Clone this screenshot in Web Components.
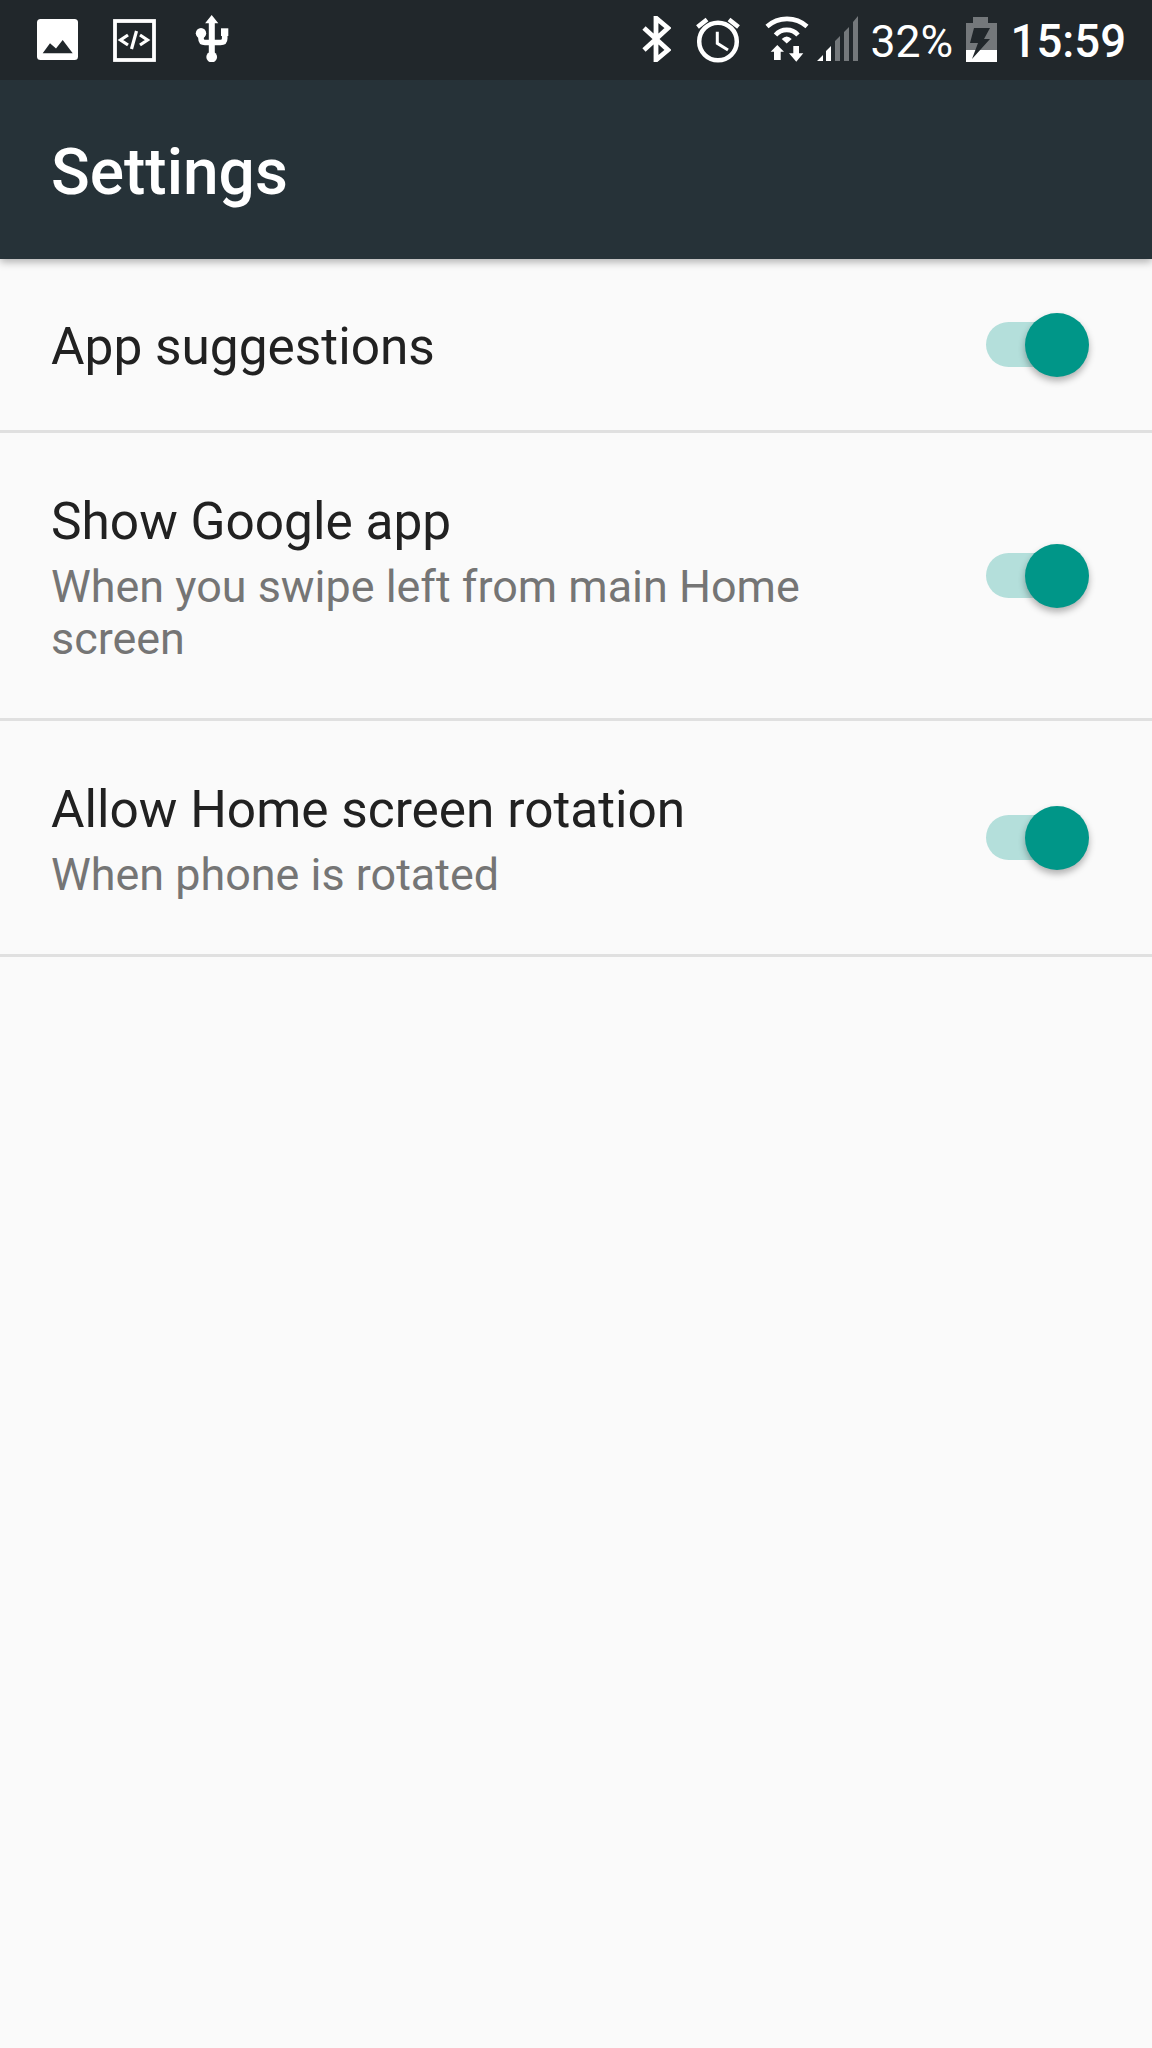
<!DOCTYPE html>
<html><head><meta charset="utf-8"><style>
html,body{margin:0;padding:0;background:#fafafa}
body{width:1152px;height:2048px;overflow:hidden;font-family:Roboto,sans-serif}
</style></head><body>
<settings-screen>
<status-bar></status-bar>
<app-bar>Settings</app-bar>
<setting-row title-text="App suggestions" style="--row:174px;--t:2px"></setting-row>
<setting-row title-text="Show Google app" style="--row:288px">When you swipe left from main Home screen</setting-row>
<setting-row title-text="Allow Home screen rotation" style="--row:236px">When phone is rotated</setting-row>
</settings-screen>
<script>
const def=(n,html)=>customElements.define(n,class extends HTMLElement{connectedCallback(){if(this.shadowRoot)return;const s=this.attachShadow({mode:'open'});s.innerHTML=typeof html==='function'?html(this):html;}});
def('settings-screen',`<style>:host{display:flex;flex-direction:column;width:1152px;height:2048px;background:#fafafa}</style><slot></slot>`);
def('status-bar',`<style>
:host{display:flex;align-items:center;height:80px;background:#21272b;color:#fff;font:400 44.5px Roboto,sans-serif;position:relative;z-index:2}
svg{display:block;flex:none}
.l{display:flex;align-items:center;padding-left:36px}
.r{margin-left:auto;display:flex;align-items:center;padding-right:26px}
span{line-height:80px;white-space:nowrap;margin-top:4px}
</style>
<div class="l">
<svg width="43" height="43" viewBox="0 0 43 43" style="margin-top:-1px"><rect width="41" height="41" x="1" y="1" rx="3.5" fill="#fff"/><path d="M6.700 35.300 14 25.300l6 5.200L26.700 22l10 13.300z" fill="#21272b"/></svg>
<svg width="43" height="43" viewBox="0 0 43 43" style="margin:1px 0 0 34px"><rect x="2" y="2" width="39" height="39" fill="none" stroke="#fff" stroke-width="3.800"/><path d="M15 16l-7.500 5 7.500 5M27 16l7.500 5-7.500 5M23.500 12l-5 18" fill="none" stroke="#fff" stroke-width="3.200"/></svg>
<svg width="36" height="48" viewBox="0 0 36 48" style="margin:-4px 0 0 38px"><path d="M17.700 1l6.600 8.300H20.800V39h-6V9.300H11.100z" fill="#fff"/><circle cx="17.700" cy="43" r="5.400" fill="#fff"/><circle cx="7" cy="19.300" r="5.200" fill="#fff"/><rect x="27" y="14.300" width="7.300" height="7.700" fill="#fff"/><path d="M7 20v4.500q0 4 4 4H26.500q4.200 0 4.200-4V21" fill="none" stroke="#fff" stroke-width="5.600"/></svg>
</div>
<div class="r">
<svg width="30" height="46" viewBox="0 0 30 46" style="margin-top:-2px"><path d="M3 12l24 22-12 10V2l12 10L3 34" fill="none" stroke="#fff" stroke-width="4.800"/></svg>
<svg width="46" height="46" viewBox="0 0 46 46" style="margin:0 0 0 24px"><circle cx="23" cy="24.500" r="18.800" fill="none" stroke="#fff" stroke-width="4.500"/><path d="M22.300 14.700v11.600L33 33" fill="none" stroke="#fff" stroke-width="3"/><path d="M2.500 10L12 2.500M43.500 10L34 2.500" stroke="#fff" stroke-width="4.500"/></svg>
<svg width="46" height="46" viewBox="0 0 46 46" style="margin:-2px 0 0 24px"><path d="M2 10.500A30 30 0 0 1 42 10.500M10.500 19A15 15 0 0 1 33 19" fill="none" stroke="#fff" stroke-width="4.600"/><path d="M16.700 23Q21.700 18 26.700 23l-5 4.500z" fill="#fff"/><path d="M12.300 29 5.700 35.700H9V44h6.700V35.700H19zM28.300 30v7.300H24l7.300 8.400 7-8.400H34V30z" fill="#fff"/></svg>
<svg width="42" height="46" viewBox="0 0 42 46" style="margin:-4px 0 0 6px"><path d="M0 46l6-6v6zM9 46V36l5-5v15z" fill="#fff"/><path d="M18 46V26l5-5v25zM27 46V17l5-5v34zM36 46V7l5-6v45z" fill="#74787b"/></svg>
<span style="margin-left:11px">32%</span>
<svg width="31" height="46" viewBox="0 0 31 46" style="margin:-2px 0 0 13px"><path d="M0 7h7V1h15v6h9v28H0z" fill="#74787b"/><rect y="34" width="31" height="12" fill="#fff"/><path d="M8 12h16l-6 11h6L6 43l6-16H4z" fill="#21272b"/></svg>
<span style="margin-left:13.500px;font-weight:500;font-size:45.500px">15:59</span>
</div>`);
def('app-bar',`<style>
:host{display:flex;align-items:center;box-sizing:border-box;height:179px;padding:0 51px 0 51px;background:#263238;color:#fff;font:500 64px Roboto,sans-serif;box-shadow:0 3px 8px rgba(0,0,0,.3);position:relative;z-index:1}
div{margin-top:5px}
</style><div><slot></slot></div>`);
def('setting-row',e=>`<style>
:host{display:flex;align-items:center;justify-content:space-between;box-sizing:border-box;height:var(--row);padding:3.500px 76px 0 51px;border-bottom:3px solid #e0e0e0;background:#fafafa}
.x{padding-top:var(--t,0)}
.t{font:400 51.400px/64px Roboto,sans-serif;color:#212121}
.s{font:400 44.900px/52px Roboto,sans-serif;color:#757575;width:800px;margin-top:6.700px}
.s.e{display:none}
.sw{position:relative;width:90px;height:45px;flex:none;border-radius:23px;background:#b4dfdb;margin-top:-3px}
.sw::after{content:"";position:absolute;right:-13px;top:-9px;width:64px;height:64px;border-radius:50%;background:#009688;box-shadow:0 4px 7px rgba(0,0,0,.3)}
</style><div class="x"><div class="t">${e.getAttribute('title-text')}</div><div class="s ${e.textContent.trim()?'':'e'}"><slot></slot></div></div><div class="sw"></div>`);
</script></body></html>
